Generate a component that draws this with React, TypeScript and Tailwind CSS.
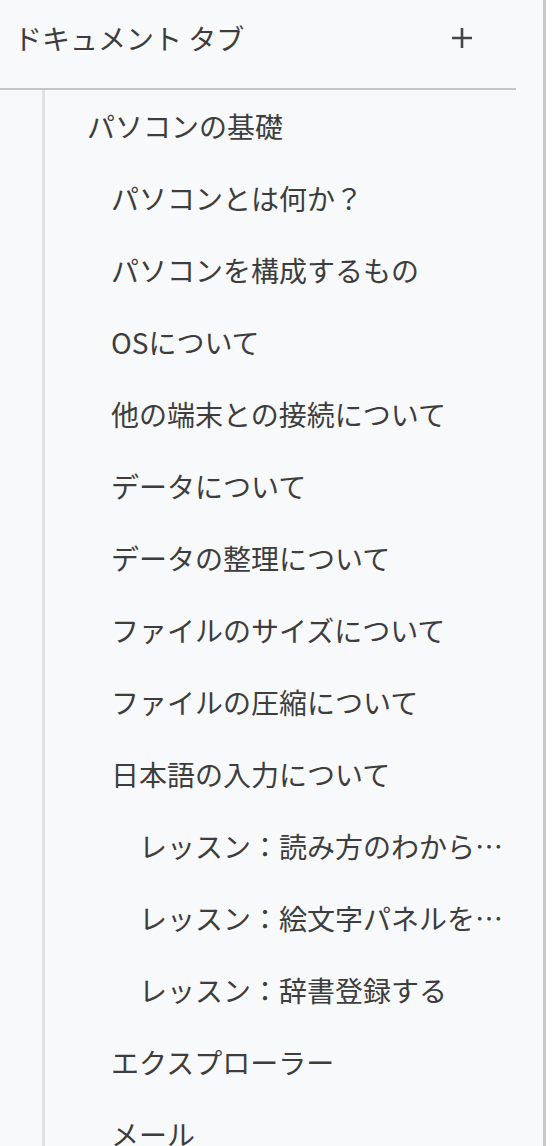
const items: { label: string; level: 1 | 2 | 3 }[] = [
  { label: 'パソコンの基礎', level: 1 },
  { label: 'パソコンとは何か？', level: 2 },
  { label: 'パソコンを構成するもの', level: 2 },
  { label: 'OSについて', level: 2 },
  { label: '他の端末との接続について', level: 2 },
  { label: 'データについて', level: 2 },
  { label: 'データの整理について', level: 2 },
  { label: 'ファイルのサイズについて', level: 2 },
  { label: 'ファイルの圧縮について', level: 2 },
  { label: '日本語の入力について', level: 2 },
  { label: 'レッスン：読み方のわからない漢字を入力する', level: 3 },
  { label: 'レッスン：絵文字パネルを使う', level: 3 },
  { label: 'レッスン：辞書登録する', level: 3 },
  { label: 'エクスプローラー', level: 2 },
  { label: 'メール', level: 2 },
  { label: 'インターネット', level: 2 },
];

const indent: Record<1 | 2 | 3, string> = {
  1: 'pl-[42px]',
  2: 'pl-[66px]',
  3: 'pl-[94px]',
};

const PlusIcon = () => (
  <svg width="20" height="20" viewBox="0 0 20 20" className="text-[#454545]">
    <path d="M10 0v20M0 10h20" stroke="currentColor" strokeWidth="2.6" fill="none" />
  </svg>
);

export default function App() {
  return (
    <div className="w-full h-[1146px] overflow-hidden bg-white">
      <div
        className="flex flex-col w-[546px] h-full bg-[#f8f9fb] border-r-[3px] border-[#c8c8c8] text-[#3d3d3d]"
        style={{ fontFamily: '"Noto Sans CJK JP", "Noto Sans", sans-serif' }}
      >
        {/* header */}
        <div className="flex items-center justify-between h-[76px] pl-[14px] pr-[61px] shrink-0">
          <span className="text-[28px] leading-none whitespace-nowrap">ドキュメント タブ</span>
          <button className="w-10 h-10 flex items-center justify-center">
            <PlusIcon />
          </button>
        </div>
        <div className="mt-[12px] mr-[27px] h-[2px] bg-[#c6c6c6] shrink-0" />

        {/* outline */}
        <div className="flex-1 ml-[42px] mr-[27px] border-l-[3px] border-[#e1e1e1] min-w-0">
          {items.map((it) => (
            <div
              key={it.label}
              className={`${indent[it.level]} h-[72px] text-[28px] leading-[72px] whitespace-nowrap overflow-hidden text-ellipsis`}
            >
              {it.label}
            </div>
          ))}
        </div>
      </div>
    </div>
  );
}
